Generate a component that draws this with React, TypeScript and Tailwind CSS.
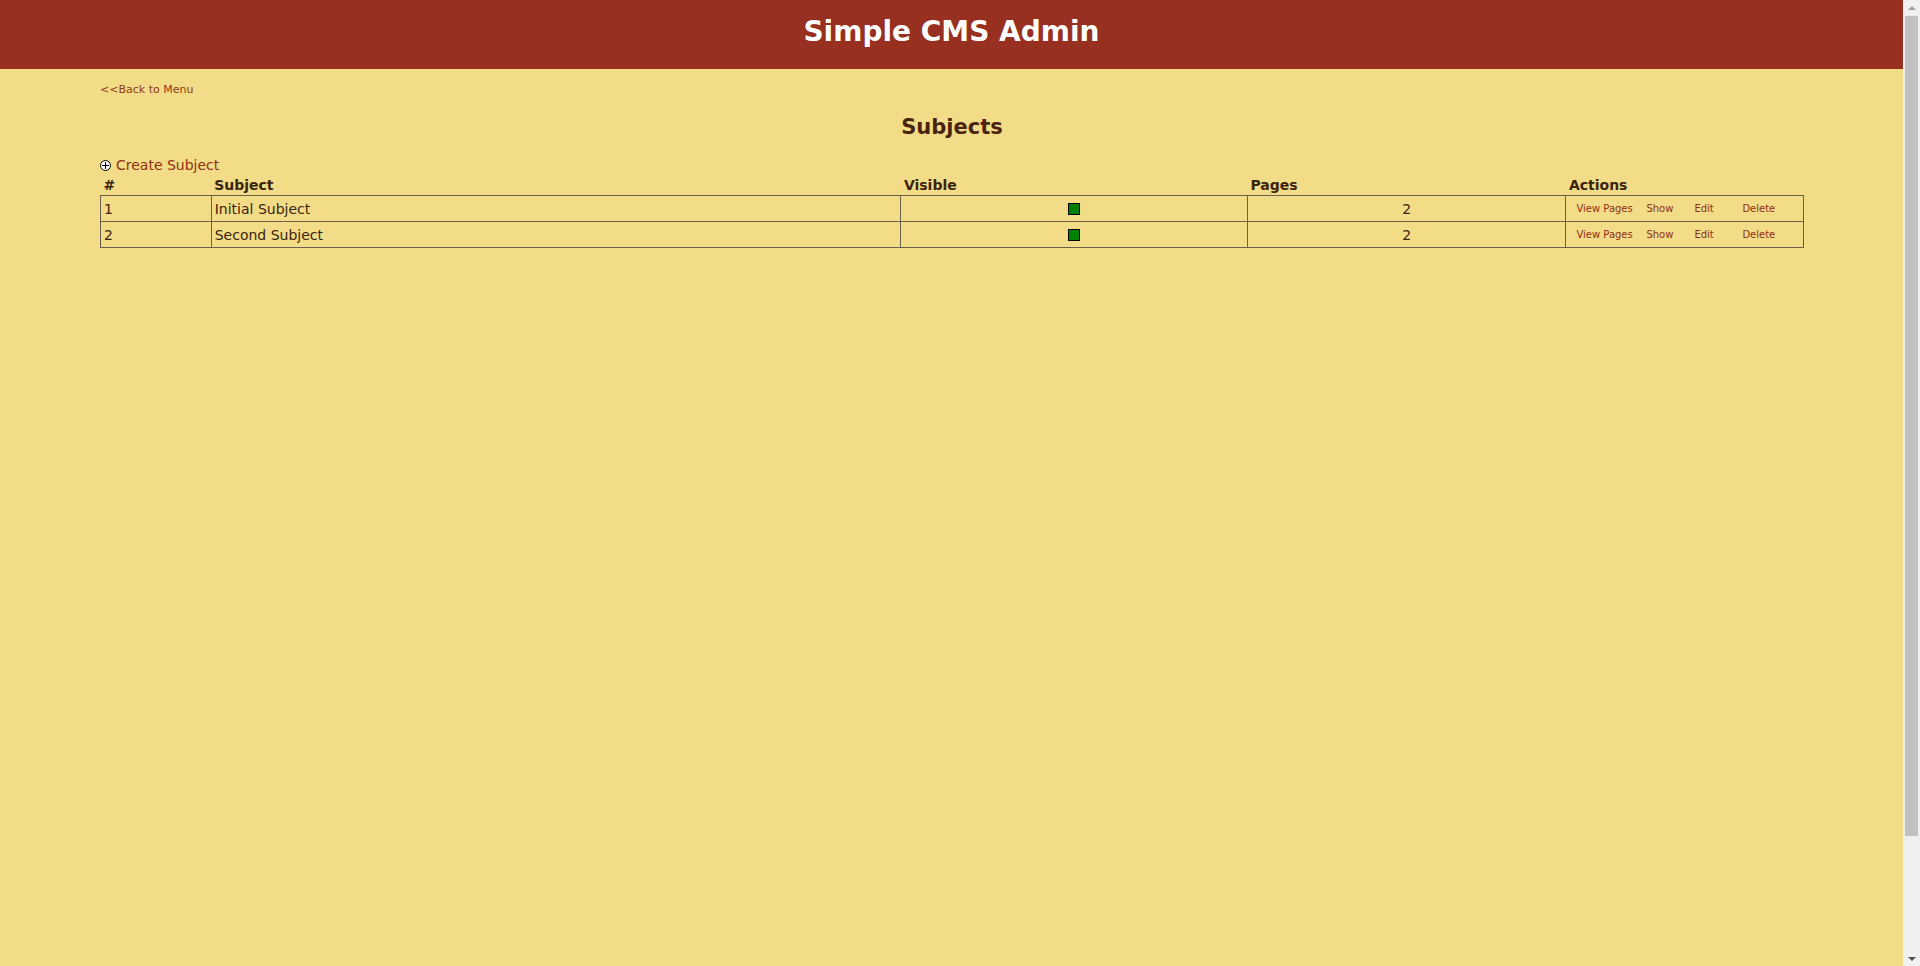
const subjects = [
  { id: 1, name: "Initial Subject", visible: true, pages: 2 },
  { id: 2, name: "Second Subject", visible: true, pages: 2 },
];

const actions = [
  { label: "View Pages", width: "w-[70px]" },
  { label: "Show", width: "w-12" },
  { label: "Edit", width: "w-12" },
  { label: "Delete", width: "w-12" },
];

const columns = [
  { label: "#", width: "w-[6.5%]" },
  { label: "Subject", width: "w-[40.5%]" },
  { label: "Visible", width: "w-[20.35%]" },
  { label: "Pages", width: "w-[18.7%]" },
  { label: "Actions", width: "" },
];

function PlusIcon() {
  return (
    <svg className="h-[11px] w-[11px] shrink-0" viewBox="0 0 11 11" aria-hidden="true">
      <circle cx="5.5" cy="5.5" r="5" fill="#fff" stroke="#000" strokeWidth="1" />
      <path d="M5.5 2v7M2 5.5h7" stroke="#000" strokeWidth="1" />
    </svg>
  );
}

function ScrollTrack() {
  return (
    <div className="flex w-[17px] shrink-0 flex-col items-center bg-[#f0f0f0]" aria-hidden="true">
      <svg className="h-4 w-4 shrink-0" viewBox="0 0 16 16">
        <path d="M4 10L8 6l4 4z" fill="#a0a0a0" />
      </svg>
      <div className="w-[13px] grow-[820] basis-0 bg-[#c1c1c1]" />
      <div className="grow-[114] basis-0" />
      <svg className="h-4 w-4 shrink-0" viewBox="0 0 16 16">
        <path d="M4 7h8l-4 4z" fill="#505050" />
      </svg>
    </div>
  );
}

export default function App() {
  return (
    <div className="flex min-h-screen bg-[#f2dc87] font-[Verdana,'DejaVu_Sans',sans-serif] text-sm text-[#3a240c]">
      <div className="min-w-0 flex-1">
        <header className="flex h-[69px] justify-center bg-[#973020] pt-3.5">
          <h1 className="text-[28px] leading-9 font-bold text-white">Simple CMS Admin</h1>
        </header>
        <main className="pr-[99px] pl-[100px] pt-3">
          <a href="#menu" className="block text-[11px] leading-[18px] text-[#8f3a14]">
            &lt;&lt;Back to Menu
          </a>
          <h2 className="mt-3.5 text-center text-[21px] leading-7 font-bold text-[#4a2410]">Subjects</h2>
          <a href="#create" className="mt-3.5 flex items-center gap-[5px] leading-5 text-[#8f2f14]">
            <PlusIcon />
            Create Subject
          </a>
          <table className="w-full table-fixed border-collapse">
            <thead>
              <tr>
                {columns.map((c) => (
                  <th key={c.label} scope="col" className={`px-[3px] py-0.5 text-left leading-4 font-bold ${c.width}`}>
                    {c.label}
                  </th>
                ))}
              </tr>
            </thead>
            <tbody>
              {subjects.map((s) => (
                <tr key={s.id} className="h-[26px]">
                  <td className="border border-[#6b604c] px-[3px]">{s.id}</td>
                  <td className="border border-[#6b604c] px-[3px]">{s.name}</td>
                  <td className="border border-[#6b604c]">
                    <span
                      role="img"
                      aria-label={s.visible ? "Visible" : "Hidden"}
                      className="mx-auto block h-3 w-3 border border-black bg-[#008000]"
                    />
                  </td>
                  <td className="border border-[#6b604c] text-center">{s.pages}</td>
                  <td className="border border-[#6b604c] px-2.5">
                    <div className="flex text-[10px] leading-4">
                      {actions.map((a) => (
                        <a key={a.label} href={`#subject-${s.id}`} className={`whitespace-nowrap text-[#8f2f14] ${a.width}`}>
                          {a.label}
                        </a>
                      ))}
                    </div>
                  </td>
                </tr>
              ))}
            </tbody>
          </table>
        </main>
      </div>
      <ScrollTrack />
    </div>
  );
}
